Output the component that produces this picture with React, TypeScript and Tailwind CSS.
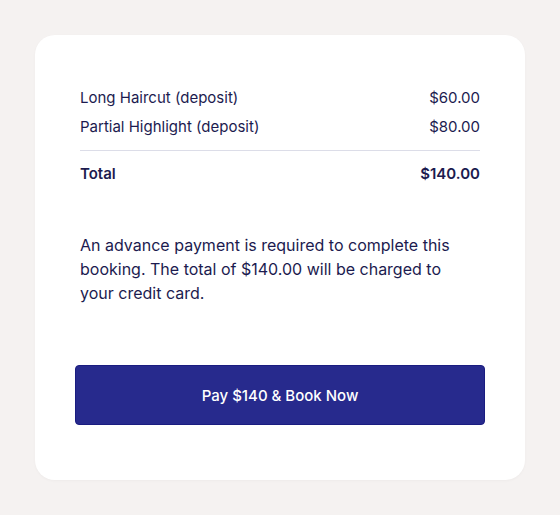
export default function App() {
  return (
    <div className="min-h-[515px] w-[560px] bg-[#f5f2f1] pt-[35px] pl-[35px]" style={{ fontFamily: "Inter, 'Noto Sans', sans-serif" }}>
      <div className="w-[490px] h-[445px] rounded-[20px] bg-white px-[45px] pt-[51px] shadow-[0_1px_3px_rgba(0,0,0,0.03)] text-[#1c1b4f]">
        <div className="flex flex-col">
          <div className="flex justify-between text-[15px] leading-[24px]">
            <span>Long Haircut (deposit)</span>
            <span>$60.00</span>
          </div>
          <div className="flex justify-between text-[15px] leading-[24px] mt-[5px]">
            <span>Partial Highlight (deposit)</span>
            <span>$80.00</span>
          </div>
          <div className="h-px bg-[#dcdde8] mt-[11px]" />
          <div className="flex justify-between text-[15px] leading-[24px] mt-[11px] font-semibold">
            <span>Total</span>
            <span>$140.00</span>
          </div>
          <p className="text-[16px] leading-[24px] mt-[47px] pr-[20px]">
            An advance payment is required to complete this booking. The total of $140.00 will be charged to your credit card.
          </p>
          <button className="mt-[60px] -mx-[5px] h-[60px] pt-[2px] rounded-[4px] bg-[#272a8d] border border-[#1a1c80] text-white text-[15px] font-medium">
            Pay $140 &amp; Book Now
          </button>
        </div>
      </div>
    </div>
  );
}
